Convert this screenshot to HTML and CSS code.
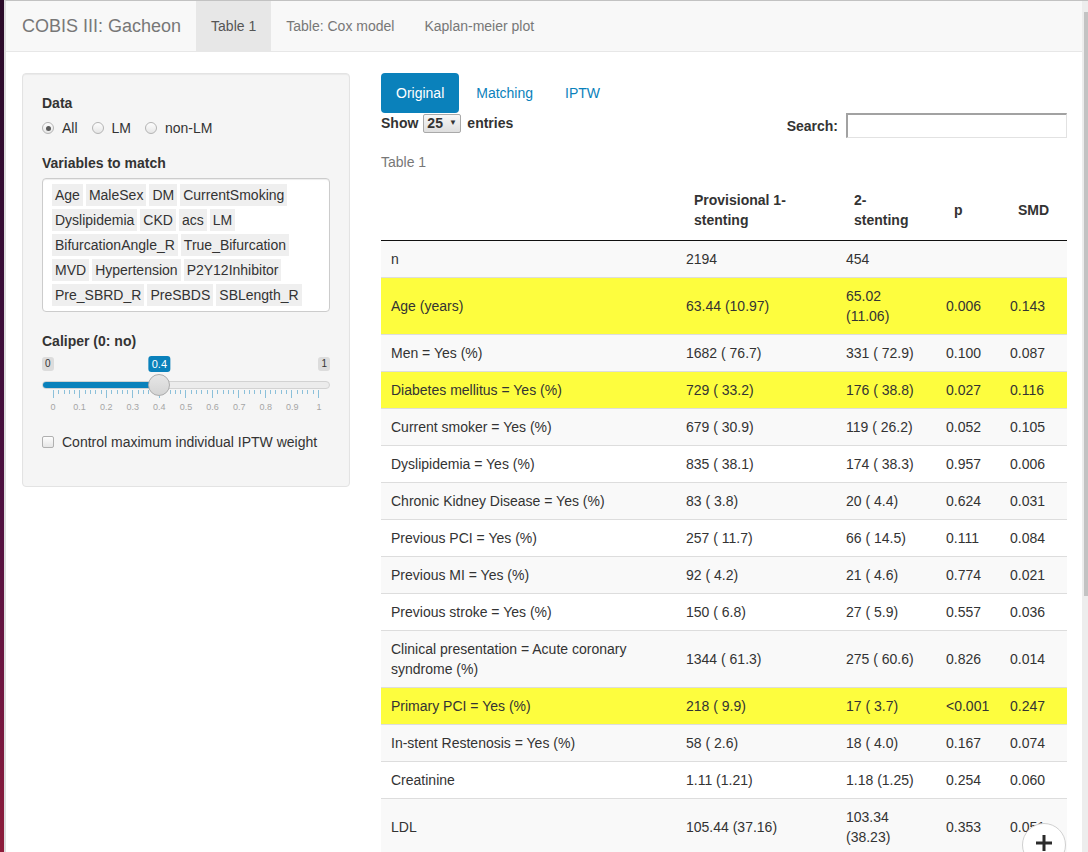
FILE: index.html
```html
<!DOCTYPE html>
<html>
<head>
<meta charset="utf-8">
<title>COBIS III: Gacheon</title>
<link rel="stylesheet" href="styles.css">
</head>
<body>
<div class="desk"></div>
<div class="frame">
  <div class="window">
    <nav class="navbar">
      <span class="brand">COBIS III: Gacheon</span>
      <ul class="nav">
        <li class="active"><a>Table 1</a></li>
        <li><a>Table: Cox model</a></li>
        <li><a>Kaplan-meier plot</a></li>
      </ul>
    </nav>

    <div class="layout">
      <aside class="side">
        <div class="well">
          <div class="group">
            <label class="ctl-label">Data</label>
            <div class="radios">
              <label class="radio"><span class="rdot checked"></span>All</label>
              <label class="radio"><span class="rdot"></span>LM</label>
              <label class="radio"><span class="rdot"></span>non-LM</label>
            </div>
          </div>

          <div class="group group-vars">
            <label class="ctl-label">Variables to match</label>
            <div class="selectize">
              <span class="tag">Age</span><span class="tag">MaleSex</span><span class="tag">DM</span><span class="tag">CurrentSmoking</span><span class="tag">Dyslipidemia</span><span class="tag">CKD</span><span class="tag">acs</span><span class="tag">LM</span><span class="tag">BifurcationAngle_R</span><span class="tag">True_Bifurcation</span><span class="tag">MVD</span><span class="tag">Hypertension</span><span class="tag">P2Y12Inhibitor</span><span class="tag">Pre_SBRD_R</span><span class="tag">PreSBDS</span><span class="tag">SBLength_R</span>
            </div>
          </div>

          <div class="group-slider">
            <label class="ctl-label">Caliper (0: no)</label>
            <div class="slider">
              <div class="irs-top">
                <span class="irs-minmax">0</span>
                <span class="irs-minmax">1</span>
              </div>
              <span class="irs-single" style="left:calc(40% + 2.2px)">0.4</span>
              <div class="irs-line"><div class="irs-bar" style="width:calc(40% + 2.2px)"></div></div>
              <span class="irs-handle" style="left:calc(40% - 8.8px)"></span>
              <div class="irs-ticks">
                <i class="big"></i><i></i><i></i><i></i><i></i>
                <i class="big"></i><i></i><i></i><i></i><i></i>
                <i class="big"></i><i></i><i></i><i></i><i></i>
                <i class="big"></i><i></i><i></i><i></i><i></i>
                <i class="big"></i><i></i><i></i><i></i><i></i>
                <i class="big"></i><i></i><i></i><i></i><i></i>
                <i class="big"></i><i></i><i></i><i></i><i></i>
                <i class="big"></i><i></i><i></i><i></i><i></i>
                <i class="big"></i><i></i><i></i><i></i><i></i>
                <i class="big"></i><i></i><i></i><i></i><i></i>
                <i class="big"></i>
              </div>
              <div class="irs-grid-text">
                <span>0</span><span>0.1</span><span>0.2</span><span>0.3</span><span>0.4</span><span>0.5</span><span>0.6</span><span>0.7</span><span>0.8</span><span>0.9</span><span>1</span>
              </div>
            </div>
          </div>

          <div class="check-group">
            <label class="check"><span class="cbox"></span>Control maximum individual IPTW weight</label>
          </div>
        </div>
      </aside>

      <main class="main">
        <ul class="pills">
          <li class="active"><a>Original</a></li>
          <li><a>Matching</a></li>
          <li><a>IPTW</a></li>
        </ul>

        <div class="dt-top">
          <div class="dt-length">Show <span class="dt-select">25 <span class="arrow">▼</span></span> entries</div>
          <div class="dt-filter">Search: <span class="dt-input"></span></div>
        </div>

        <div class="caption">Table 1</div>

        <table class="tbl">
          <colgroup>
            <col class="c1"><col class="c2"><col class="c3"><col class="c4"><col class="c5">
          </colgroup>
          <thead>
            <tr><th></th><th>Provisional 1-stenting</th><th>2-stenting</th><th>p</th><th>SMD</th></tr>
          </thead>
          <tbody>
            <tr><td>n</td><td>2194</td><td>454</td><td></td><td></td></tr>
            <tr class="hl"><td>Age (years)</td><td>63.44 (10.97)</td><td>65.02 (11.06)</td><td>0.006</td><td>0.143</td></tr>
            <tr><td>Men = Yes (%)</td><td>1682 ( 76.7)</td><td>331 ( 72.9)</td><td>0.100</td><td>0.087</td></tr>
            <tr class="hl"><td>Diabetes mellitus = Yes (%)</td><td>729 ( 33.2)</td><td>176 ( 38.8)</td><td>0.027</td><td>0.116</td></tr>
            <tr><td>Current smoker = Yes (%)</td><td>679 ( 30.9)</td><td>119 ( 26.2)</td><td>0.052</td><td>0.105</td></tr>
            <tr><td>Dyslipidemia = Yes (%)</td><td>835 ( 38.1)</td><td>174 ( 38.3)</td><td>0.957</td><td>0.006</td></tr>
            <tr><td>Chronic Kidney Disease = Yes (%)</td><td>83 ( 3.8)</td><td>20 ( 4.4)</td><td>0.624</td><td>0.031</td></tr>
            <tr><td>Previous PCI = Yes (%)</td><td>257 ( 11.7)</td><td>66 ( 14.5)</td><td>0.111</td><td>0.084</td></tr>
            <tr><td>Previous MI = Yes (%)</td><td>92 ( 4.2)</td><td>21 ( 4.6)</td><td>0.774</td><td>0.021</td></tr>
            <tr><td>Previous stroke = Yes (%)</td><td>150 ( 6.8)</td><td>27 ( 5.9)</td><td>0.557</td><td>0.036</td></tr>
            <tr><td>Clinical presentation = Acute coronary syndrome (%)</td><td>1344 ( 61.3)</td><td>275 ( 60.6)</td><td>0.826</td><td>0.014</td></tr>
            <tr class="hl"><td>Primary PCI = Yes (%)</td><td>218 ( 9.9)</td><td>17 ( 3.7)</td><td>&lt;0.001</td><td>0.247</td></tr>
            <tr><td>In-stent Restenosis = Yes (%)</td><td>58 ( 2.6)</td><td>18 ( 4.0)</td><td>0.167</td><td>0.074</td></tr>
            <tr><td>Creatinine</td><td>1.11 (1.21)</td><td>1.18 (1.25)</td><td>0.254</td><td>0.060</td></tr>
            <tr><td>LDL</td><td>105.44 (37.16)</td><td>103.34 (38.23)</td><td>0.353</td><td>0.051</td></tr>
          </tbody>
        </table>
      </main>
    </div>
  </div>
  <div class="vscroll"><div class="thumb"></div></div>
</div>

<button class="fab" aria-label="Add">
  <svg width="18" height="18" viewBox="0 0 18 18"><path d="M9 1v16M1 9h16" stroke="#2b2b2b" stroke-width="3" fill="none"/></svg>
</button>
</body>
</html>
```

FILE: styles.css
```css
* { box-sizing: border-box; }

html, body {
  margin: 0;
  height: 100%;
  overflow: hidden;
}

body {
  display: flex;
  font-family: "Liberation Sans", Arial, sans-serif;
  font-size: 14px;
  line-height: 20px;
  color: #333;
  background: #fff;
}

.desk {
  width: 4px;
  flex: none;
  background: linear-gradient(#2a0a28 0%, #3a0d38 35%, #4f1040 60%, #6e1540 80%, #8d1c3a 100%);
}

.frame {
  flex: 1;
  min-width: 0;
  display: flex;
  border-left: 2px solid #dcdcdc;
  border-top: 1px solid #c2c2c2;
}

.window {
  flex: 1;
  min-width: 0;
}

.vscroll {
  width: 6px;
  flex: none;
  background: #ededed;
  padding-top: 11px;
}

.vscroll .thumb {
  width: 4px;
  margin-left: 2px;
  height: 584px;
  background: #c3c3c3;
}

/* navbar */
.navbar {
  display: flex;
  height: 51px;
  padding-left: 1px;
  background: #f8f8f8;
  border-bottom: 1px solid #e7e7e7;
}

.brand {
  padding: 15px;
  font-size: 18px;
  line-height: 20px;
  color: #777;
}

.nav {
  display: flex;
  list-style: none;
  margin: 0;
  padding: 0;
}

.nav a {
  display: block;
  padding: 15px;
  color: #777;
}

.nav .active a {
  background: #e7e7e7;
  color: #555;
}

/* layout */
.layout {
  display: flex;
  padding-top: 21px;
}

.side {
  width: 360px;
  flex: none;
  padding: 0 16px;
}

.main {
  flex: 1;
  min-width: 0;
  padding: 0 15px;
}

/* sidebar well */
.well {
  background: #f5f5f5;
  border: 1px solid #e3e3e3;
  border-radius: 4px;
  box-shadow: inset 0 1px 1px rgba(0, 0, 0, .05);
  padding: 19px;
}

.ctl-label {
  display: block;
  font-weight: bold;
  margin-bottom: 5px;
}

.group { margin-bottom: 15px; }
.group-vars { margin-bottom: 19px; }

.radios {
  display: flex;
  gap: 14px;
}

.radio {
  display: flex;
  align-items: center;
}

.rdot {
  width: 12px;
  height: 12px;
  margin-right: 8px;
  border-radius: 50%;
  border: 1px solid #b4b4b4;
  background: linear-gradient(#fdfdfd, #e6e6e6);
  display: flex;
  align-items: center;
  justify-content: center;
}

.rdot.checked::after {
  content: "";
  width: 5px;
  height: 5px;
  border-radius: 50%;
  background: #5a5a5a;
}

.selectize {
  display: flex;
  flex-wrap: wrap;
  background: #fff;
  border: 1px solid #ccc;
  border-radius: 4px;
  box-shadow: inset 0 1px 1px rgba(0, 0, 0, .075);
  padding: 5px 8px 2px 9px;
}

.tag {
  background: #efefef;
  color: #333;
  padding: 1px 3px;
  margin: 0 3px 3px 0;
}

/* slider */
.slider {
  position: relative;
  height: 57px;
}

.irs-top {
  display: flex;
  justify-content: space-between;
  height: 15px;
  padding-top: 1px;
}

.irs-minmax {
  font-size: 10px;
  line-height: 14px;
  padding: 0 3px;
  background: rgba(0, 0, 0, .1);
  border-radius: 3px;
  color: #333;
}

.irs-single {
  position: absolute;
  top: 0;
  transform: translateX(-50%);
  font-size: 11px;
  line-height: 15px;
  padding: 1px 3px 0;
  background: #0a81bb;
  color: #fff;
  border-radius: 3px;
}

.irs-line {
  margin-top: 10px;
  height: 8px;
  border: 1px solid #d2d2d2;
  border-radius: 8px;
  background: #ececec;
  overflow: hidden;
}

.irs-bar {
  margin: -1px 0 0 -1px;
  height: 8px;
  background: #0a81bb;
}

.irs-handle {
  position: absolute;
  top: 18px;
  width: 22px;
  height: 22px;
  border-radius: 50%;
  border: 1px solid #acacac;
  background: linear-gradient(#e6e6e6, #d4d4d4);
}

.irs-ticks {
  display: flex;
  justify-content: space-between;
  align-items: flex-start;
  padding: 0 11px;
  margin-top: 1px;
  height: 8px;
}

.irs-ticks i {
  width: 1px;
  height: 4px;
  background: rgba(10, 129, 187, .45);
}

.irs-ticks i.big { height: 8px; }

.irs-grid-text {
  display: flex;
  justify-content: space-between;
  padding: 0 1px;
  margin-top: 3px;
}

.irs-grid-text span {
  width: 20px;
  text-align: center;
  font-size: 9px;
  line-height: 12px;
  color: #a5a5a5;
}

.check-group {
  margin-top: 19px;
  margin-bottom: 15px;
}

.check {
  display: flex;
  align-items: center;
}

.cbox {
  width: 12px;
  height: 12px;
  margin-right: 8px;
  border: 1px solid #b0b0b0;
  border-radius: 2px;
  background: linear-gradient(#fdfdfd, #e6e6e6);
}

/* main */
.pills {
  display: flex;
  gap: 2px;
  list-style: none;
  margin: 0;
  padding: 0;
}

.pills a {
  display: block;
  padding: 10px 15px;
  border-radius: 4px;
  color: #0a81bb;
}

.pills .active a {
  background: #0a81bb;
  color: #fff;
}

.dt-top {
  display: flex;
  justify-content: space-between;
  align-items: flex-start;
}

.dt-length {
  font-weight: bold;
  display: flex;
  align-items: center;
  gap: 4px;
  height: 20px;
}

.dt-select {
  display: inline-flex;
  align-items: center;
  gap: 6px;
  height: 19px;
  width: 38px;
  padding: 0 4px 0 3px;
  margin-left: 1px;
  margin-right: 2px;
  border: 1px solid #a9a9a9;
  border-radius: 2px;
  background: linear-gradient(#f7f7f7, #dedede);
  font-weight: bold;
}

.dt-select .arrow {
  font-size: 8px;
  line-height: 1;
}

.dt-filter {
  display: flex;
  align-items: center;
  gap: 8px;
  font-weight: bold;
}

.dt-input {
  width: 221px;
  height: 25px;
  background: #fff;
  border-style: solid;
  border-width: 2px 1px 1px 2px;
  border-color: #a2a2a2 #e2e2e2 #e2e2e2 #a2a2a2;
}

.caption {
  color: #777;
  margin-top: 14px;
  margin-bottom: 8px;
}

.tbl {
  width: 100%;
  table-layout: fixed;
  border-collapse: separate;
  border-spacing: 0;
}

.tbl .c1 { width: 295px; }
.tbl .c2 { width: 160px; }
.tbl .c3 { width: 100px; }
.tbl .c4 { width: 64px; }
.tbl .c5 { width: 67px; }

.tbl th {
  padding: 10px 18px;
  text-align: left;
  vertical-align: middle;
  font-weight: bold;
  border-bottom: 1px solid #111;
}

.tbl td {
  padding: 8px 10px;
  vertical-align: middle;
  border-top: 1px solid #ddd;
}

.tbl tbody tr:first-child td { border-top: 0; }

.tbl tbody tr:nth-child(odd) { background: #f9f9f9; }

.tbl tbody tr.hl { background: #fdfd3e; }

/* floating button */
.fab {
  position: fixed;
  right: 22px;
  bottom: -15px;
  width: 44px;
  height: 44px;
  border-radius: 50%;
  border: 1px solid #cfcfcf;
  background: #fff;
  padding: 0 0 4px;
  display: flex;
  align-items: center;
  justify-content: center;
}
```
